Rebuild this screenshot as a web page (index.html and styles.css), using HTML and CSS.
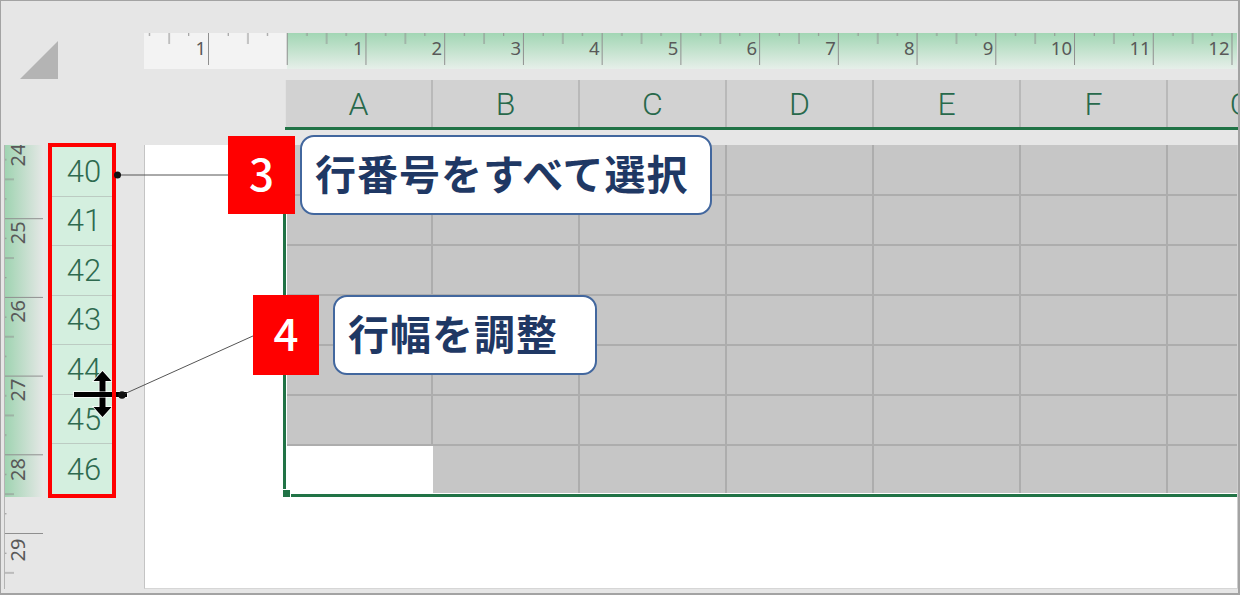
FILE: index.html
```html
<!DOCTYPE html>
<html lang="ja">
<head>
  <meta charset="UTF-8">
  <meta name="viewport" content="width=device-width, initial-scale=1.0">
  <title>行の高さを調整</title>
  <link rel="stylesheet" href="styles.css">
</head>
<body>
  <div class="window">
    <div class="top">
      <div class="corner">
        <svg width="38" height="38" viewBox="0 0 38 38"><path d="M38 0V38H0Z" fill="#b4b4b4"/></svg>
      </div>
      <svg class="hruler" width="1093" height="36" viewBox="144 33 1093 36">
        <defs>
          <linearGradient id="hgreen" x1="0" y1="0" x2="0" y2="1">
            <stop offset="0" stop-color="#a2d6b4"/>
            <stop offset="1" stop-color="#e6efe9"/>
          </linearGradient>
          <pattern id="hticks" patternUnits="userSpaceOnUse" x="208" y="33" width="78.73" height="36">
            <path d="M0.5 0V32M20.2 0V3M39.9 0V11M59.5 0V3" stroke="#8f8f8f" stroke-width="1" fill="none"/>
          </pattern>
        </defs>
        <rect x="144" y="33" width="143" height="36" fill="#f3f3f3"/>
        <rect x="287" y="33" width="950" height="36" fill="url(#hgreen)"/>
        <rect x="144" y="33" width="1093" height="36" fill="url(#hticks)"/>
        <g class="rnum" text-anchor="end">
          <text x="206" y="55">1</text>
          <text x="363.5" y="55">1</text>
          <text x="442" y="55">2</text>
          <text x="521" y="55">3</text>
          <text x="599.6" y="55">4</text>
          <text x="678.4" y="55">5</text>
          <text x="757" y="55">6</text>
          <text x="835.8" y="55">7</text>
          <text x="914.5" y="55">8</text>
          <text x="993.3" y="55">9</text>
          <text x="1072" y="55">10</text>
          <text x="1150.7" y="55">11</text>
          <text x="1229.5" y="55">12</text>
        </g>
      </svg>
    </div>

    <div class="colbar">
      <div class="colhead">A</div>
      <div class="colhead">B</div>
      <div class="colhead">C</div>
      <div class="colhead">D</div>
      <div class="colhead">E</div>
      <div class="colhead">F</div>
      <div class="colhead">G</div>
    </div>

    <div class="body">
      <svg class="vruler" width="42" height="444" viewBox="4 145 42 444">
        <defs>
          <linearGradient id="vgreen" x1="0" y1="0" x2="1" y2="0">
            <stop offset="0" stop-color="#9ed3b0"/>
            <stop offset="1" stop-color="#e6e8e7"/>
          </linearGradient>
          <pattern id="vticks" patternUnits="userSpaceOnUse" x="4" y="218.2" width="42" height="78.7">
            <path d="M0 0.5H39M0 20.2H2.5M0 39.9H10M0 59.5H2.5" stroke="#8f8f8f" stroke-width="1" fill="none"/>
          </pattern>
        </defs>
        <rect x="4" y="144" width="40" height="353" fill="url(#vgreen)"/>
        <rect x="4" y="145" width="42" height="444" fill="url(#vticks)"/>
        <path d="M4.5 145V589" stroke="#b3b3b3" stroke-width="1"/>
        <g class="vnum" text-anchor="middle" dominant-baseline="central">
          <text transform="translate(17 155) rotate(-90)">24</text>
          <text transform="translate(17 232.7) rotate(-90)">25</text>
          <text transform="translate(17 311.4) rotate(-90)">26</text>
          <text transform="translate(17 390) rotate(-90)">27</text>
          <text transform="translate(17 469.5) rotate(-90)">28</text>
          <text transform="translate(17 550) rotate(-90)">29</text>
        </g>
      </svg>

      <div class="rowheads">
        <div class="rowhead">40</div>
        <div class="rowhead">41</div>
        <div class="rowhead">42</div>
        <div class="rowhead">43</div>
        <div class="rowhead">44</div>
        <div class="rowhead">45</div>
        <div class="rowhead">46</div>
      </div>

      <div class="page">
        <div class="sel">
          <div class="cells">
            <div></div><div></div><div></div><div></div><div></div><div></div><div></div>
            <div></div><div></div><div></div><div></div><div></div><div></div><div></div>
            <div></div><div></div><div></div><div></div><div></div><div></div><div></div>
            <div></div><div></div><div></div><div></div><div></div><div></div><div></div>
            <div></div><div></div><div></div><div></div><div></div><div></div><div></div>
            <div></div><div></div><div></div><div></div><div></div><div></div><div></div>
            <div></div><div></div><div></div><div></div><div></div><div></div><div></div>
          </div>
          <span class="handle"></span>
        </div>
      </div>
    </div>

    <!-- row resize cursor -->
    <svg class="overlay cursor" width="1237" height="592" viewBox="1 1 1237 592">
      <path d="M102.5 371L111.5 381H105.5V391.5H99.5V381H93.5Z M74 392H127V397H74Z M99.5 397.5H105.5V407H111.5L102.5 417L93.5 407H99.5Z"
            fill="#000" stroke="#fff" stroke-width="1.5" stroke-linejoin="miter" paint-order="stroke"/>
    </svg>

    <!-- leader lines -->
    <svg class="overlay leaders" width="1237" height="592" viewBox="1 1 1237 592">
      <line x1="118" y1="175" x2="229" y2="175" stroke="#555" stroke-width="1"/>
      <circle cx="117.5" cy="175" r="3.5" fill="#111"/>
      <line x1="122" y1="395" x2="254" y2="335.5" stroke="#555" stroke-width="1"/>
      <circle cx="122" cy="395" r="3.8" fill="#111"/>
    </svg>

    <div class="badge b3">3</div>
    <div class="note n3">行番号をすべて選択</div>
    <div class="badge b4">4</div>
    <div class="note n4">行幅を調整</div>
  </div>
</body>
</html>
```

FILE: styles.css
```css
* {
  box-sizing: border-box;
}
body {
  margin: 0;
  font-family: Roboto, "Noto Sans", sans-serif;
}
.window {
  position: relative;
  width: 1240px;
  height: 595px;
  background-color: #e6e6e6;
  border: 1px solid #a3a3a3;
  border-right-width: 2px;
  border-bottom-width: 2px;
  overflow: hidden;
}
.top {
  display: flex;
  height: 79px;
}
.corner {
  width: 143px;
  flex-shrink: 0;
  padding: 40px 0 0 19px;
}
.corner svg,
.hruler,
.vruler {
  display: block;
  flex-shrink: 0;
}
.hruler {
  margin-top: 32px;
}
.rnum text {
  font-family: "Noto Sans", sans-serif;
  font-size: 18.5px;
  fill: #595959;
}
.vnum text {
  font-family: "Noto Sans", sans-serif;
  font-size: 20px;
  fill: #595959;
}
.colbar {
  display: flex;
  margin-left: 284px;
  height: 50px;
  border-bottom: 3px solid #217346;
  overflow: hidden;
}
.colhead {
  flex: 0 0 147px;
  display: flex;
  align-items: center;
  justify-content: center;
  background-color: #d2d2d2;
  border-right: 2px solid #b9b9b9;
  font-size: 32px;
  font-weight: 300;
  color: #28694b;
}
.colhead:first-child {
  flex-basis: 148px;
  border-left: 1px solid #e2e2e2;
}
.body {
  display: flex;
  margin-top: 15px;
  height: 444px;
}
.vruler {
  margin-left: 3px;
}
.rowheads {
  position: relative;
  flex-shrink: 0;
  width: 68px;
  height: 355px;
  margin: -2px 0 0 2px;
  padding: 4px;
  display: grid;
  grid-template-rows: repeat(7, 1fr);
  background-color: #d4efdf;
}
.rowheads::after {
  content: "";
  position: absolute;
  inset: 0;
  border: 4px solid #ff0000;
  z-index: 2;
}
.rowhead {
  display: flex;
  align-items: center;
  justify-content: center;
  padding-left: 4px;
  border-bottom: 1px solid #bccbc2;
  font-size: 31px;
  font-weight: 300;
  color: #2e6a4f;
}
.rowhead:last-child {
  border-bottom: none;
}
.page {
  flex: 1;
  margin-left: 28px;
  background-color: #fff;
  border-left: 1px solid #c4c4c4;
  border-right: 1px solid #cfcfcf;
  border-bottom: 1px solid #d6d6d6;
  overflow: hidden;
}
.sel {
  position: relative;
  width: max-content;
  margin-left: 138px;
  padding: 0 0 1px 1px;
  border-left: 3px solid #217346;
  border-bottom: 3px solid #217346;
}
.cells {
  display: grid;
  grid-template-columns: 146px repeat(6, 147px);
  grid-template-rows: 51px repeat(5, 50px) 47px;
}
.cells div {
  background-color: #c6c6c6;
  border-right: 2px solid #adadad;
  border-bottom: 2px solid #adadad;
}
.cells div:nth-child(n+43) {
  border-bottom: none;
}
.cells div:nth-child(43) {
  background-color: #fff;
  border-right-color: #fff;
}
.handle {
  position: absolute;
  left: -4px;
  bottom: -4px;
  width: 9px;
  height: 9px;
  background-color: #217346;
  border: 1px solid #fff;
}
.overlay {
  position: absolute;
  left: 0;
  top: 0;
  pointer-events: none;
}
.cursor {
  z-index: 1;
}
.leaders {
  z-index: 3;
}
.badge {
  position: absolute;
  z-index: 4;
  display: flex;
  align-items: center;
  justify-content: center;
  padding-bottom: 6px;
  background-color: #ff0000;
  color: #fff;
  font-family: "Noto Sans CJK JP", sans-serif;
  font-size: 44px;
  font-weight: 500;
  line-height: 1;
}
.note {
  position: absolute;
  z-index: 4;
  display: flex;
  align-items: center;
  padding: 0 0 5px 13px;
  background-color: #fff;
  border: 2px solid #42679e;
  border-radius: 14px;
  color: #1f3864;
  font-family: "Noto Sans CJK JP", sans-serif;
  font-size: 41px;
  font-weight: 700;
  letter-spacing: 1px;
  line-height: 1;
  white-space: nowrap;
}
.b3 {
  left: 227px;
  top: 135px;
  width: 67px;
  height: 78px;
}
.n3 {
  left: 299px;
  top: 134px;
  width: 412px;
  height: 80px;
}
.b4 {
  left: 252px;
  top: 294px;
  width: 66px;
  height: 80px;
}
.n4 {
  left: 332px;
  top: 294px;
  width: 264px;
  height: 80px;
}
```
